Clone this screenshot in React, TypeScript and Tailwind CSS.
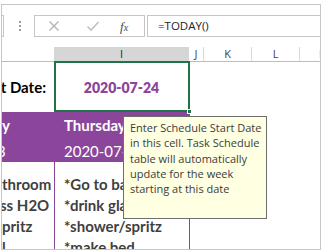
export default function App() {
  const cellFont = { fontFamily: "Lato, 'Noto Sans', sans-serif" };
  const uiFont = { fontFamily: "'Open Sans', 'Noto Sans', sans-serif" };

  return (
    <div className="w-[322px] h-[252px] bg-white overflow-hidden">
      <div className="relative mt-[4px] ml-[1px] w-[320px] h-[246px] border border-[#c6c6c6] overflow-hidden">
        {/* ── Formula bar ── */}
        <div className="mt-[10px] flex h-[22px]">
          <div className="w-[2px] shrink-0 border-y border-r border-[#c6c6c6]" />
          <div className="w-[30px] shrink-0 flex flex-col items-center justify-center gap-[2px] pl-[1px]">
            <span className="w-[2px] h-[2px] bg-[#9a9a9a]" />
            <span className="w-[2px] h-[2px] bg-[#9a9a9a]" />
            <span className="w-[2px] h-[2px] bg-[#9a9a9a]" />
          </div>
          <div className="w-[111px] shrink-0 border border-[#c6c6c6] flex items-center">
            <svg width="12" height="12" viewBox="0 0 12 12" className="ml-[13px]">
              <path d="M1.5 1.5 L10.5 10.5 M10.5 1.5 L1.5 10.5" stroke="#b4b4b4" strokeWidth="1.4" fill="none" />
            </svg>
            <svg width="14" height="12" viewBox="0 0 14 12" className="ml-[26px]">
              <path d="M1.5 6.5 L5 10 L12.5 2" stroke="#c2c2c2" strokeWidth="1.6" fill="none" />
            </svg>
            <span
              className="ml-[20px] text-[13px] italic text-[#4a4a4a] leading-none"
              style={{ fontFamily: "'Liberation Serif', serif" }}
            >
              f<span className="text-[10px]">x</span>
            </span>
          </div>
          <div className="w-[2px] shrink-0" />
          <div
            className="flex-1 border-y border-l border-[#c6c6c6] flex items-center pl-[10px] text-[11.5px] text-[#222]"
            style={uiFont}
          >
            =TODAY()
          </div>
        </div>

        {/* ── Column headers ── */}
        <div className="mt-[10px] flex h-[15px] border-b border-[#bdbdbd] text-[11px] text-[#444] leading-[14px]" style={uiFont}>
          <div className="w-[52px] shrink-0" />
          <div className="w-[135px] shrink-0 bg-[#d6d6d6] text-center text-[#222]">I</div>
          <div className="w-[15px] shrink-0 border-r border-[#dadada] text-center">J</div>
          <div className="w-[48px] shrink-0 border-r border-[#dadada] text-center">K</div>
          <div className="w-[48px] shrink-0 border-r border-[#dadada] text-center">L</div>
          <div className="w-[48px] shrink-0 text-center">M</div>
        </div>

        {/* ── Start date row ── */}
        <div className="flex h-[50px] items-center" style={cellFont}>
          <div className="w-[52px] shrink-0 overflow-hidden flex justify-end pr-[8px]">
            <span className="whitespace-nowrap font-bold text-[15px] text-black">Start Date:</span>
          </div>
          <div className="w-[135px] shrink-0 text-center font-extrabold text-[14px] text-[#8b469b]">2020-07-24</div>
        </div>

        {/* ── Day header row ── */}
        <div className="flex h-[50px] w-[188px] bg-[#8b469b] text-white text-[15px]" style={cellFont}>
          <div className="w-[52px] shrink-0 overflow-hidden leading-[26px]">
            <div className="font-bold">y</div>
            <div className="-ml-[5px]">3</div>
          </div>
          <div className="w-[135px] shrink-0 overflow-hidden pl-[10px] leading-[26px] whitespace-nowrap">
            <div className="font-bold">Thursday</div>
            <div>2020-07-24</div>
          </div>
        </div>

        {/* ── Task rows ── */}
        <div className="flex h-[87px] text-[15px] font-bold text-[#3f3f3f] leading-[21px]" style={cellFont}>
          <div className="w-[52px] shrink-0 overflow-hidden pt-[12px] whitespace-nowrap">
            <div>throom</div>
            <div className="-ml-[2px]">ss H2O</div>
            <div>pritz</div>
            <div>l</div>
          </div>
          <div className="w-[136px] shrink-0 border-x border-[#8b469b] overflow-hidden pl-[9px] pt-[12px] whitespace-nowrap">
            <div>*Go to bathroom</div>
            <div>*drink glass H2O</div>
            <div>*shower/spritz</div>
            <div>*make bed</div>
          </div>
        </div>

        {/* ── Selection ── */}
        <div className="absolute left-[52px] top-[56px] w-[136px] h-[51px] border-2 border-[#217346]" />
        <div className="absolute left-[185px] top-[104px] w-[5px] h-[5px] bg-[#217346] border border-white" />

        {/* ── Input message ── */}
        <div
          className="absolute left-[121px] top-[111px] w-[144px] h-[103px] border border-[#6e6e6e] bg-[#ffffe1] pl-[6px] pt-[3px] text-[11px] leading-[15.3px] text-[#3c3c3c]"
          style={uiFont}
        >
          Enter Schedule Start Date in this cell. Task Schedule table will automatically update for the week starting at this date
        </div>
      </div>
    </div>
  );
}
